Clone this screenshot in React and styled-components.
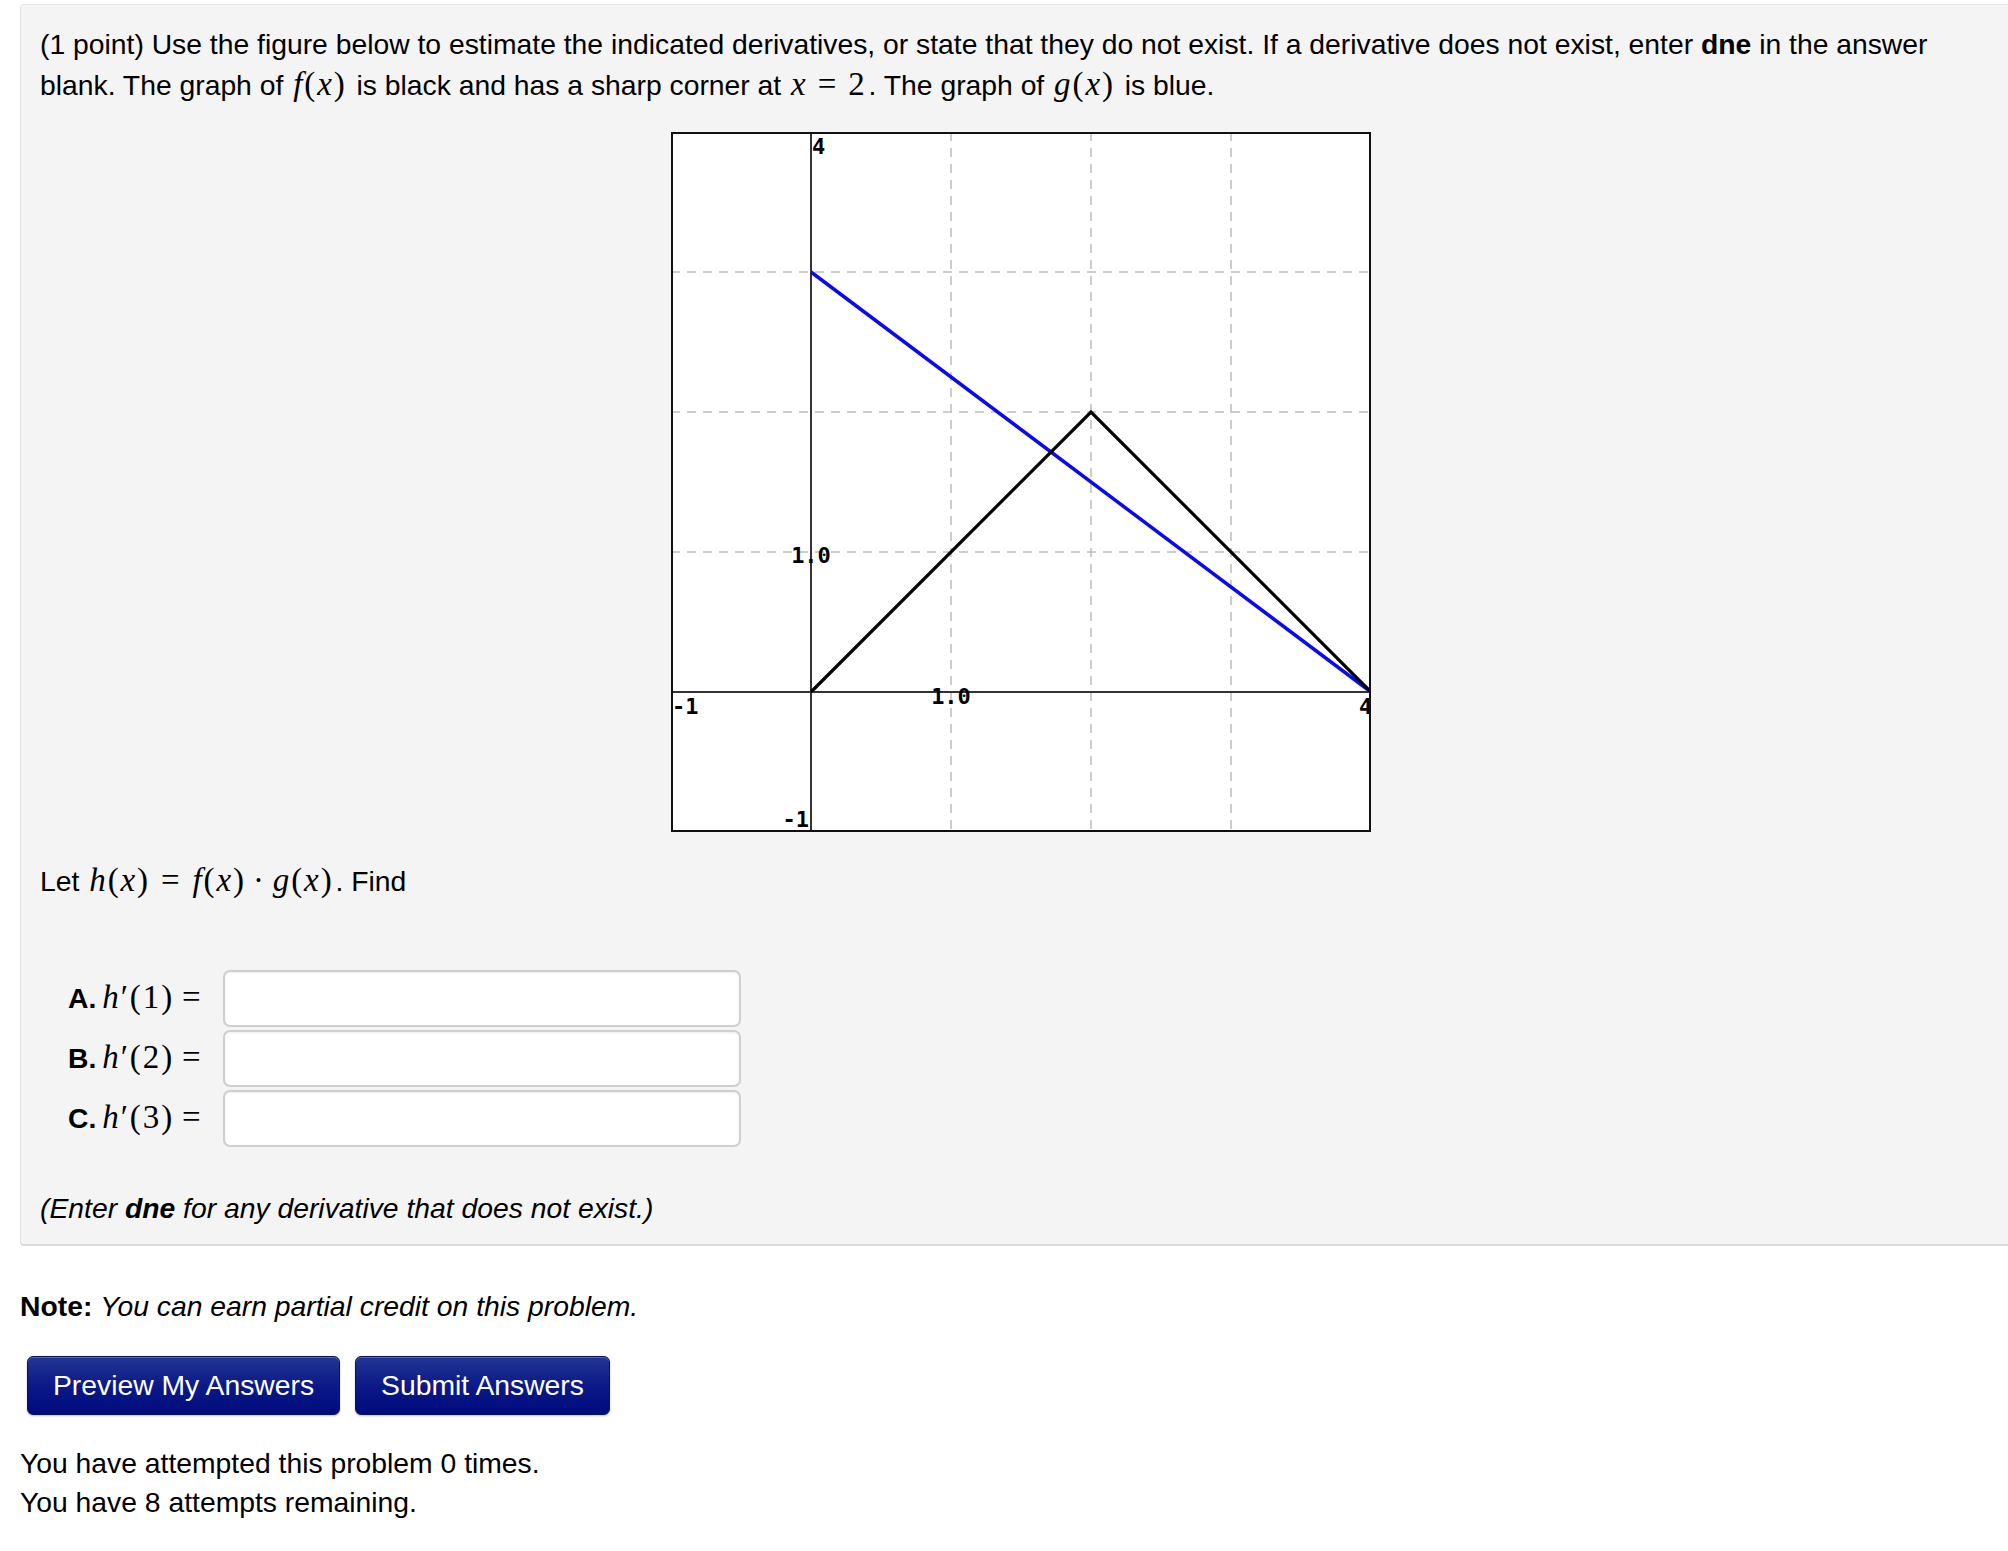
import React from "react";
import styled, { createGlobalStyle } from "styled-components";

const Global = createGlobalStyle`
  html, body { margin: 0; padding: 0; background: #ffffff; overflow: hidden; }
  body { font-family: "Liberation Sans", Arial, Helvetica, sans-serif; color: #000; }
`;

const Page = styled.div`
  padding: 4px 0 40px 20px;
  font-size: 28.3px;
  line-height: 39.5px;
`;

const Panel = styled.div`
  box-sizing: border-box;
  width: 2001px;
  background: #f4f4f4;
  border: 1px solid #e4e4e4;
  border-bottom: 2px solid #dadada;
  border-radius: 4px;
  padding: 20px 19px 16px 19px;
`;

const Para = styled.p`
  margin: ${(p) => p.$mt || 0}px 0 0 0;
  font-style: ${(p) => (p.$italic ? "italic" : "normal")};
`;

const Math = styled.span`
  font-family: "Liberation Serif", "Times New Roman", serif;
  font-size: 33px;
  letter-spacing: 1.9px;
  white-space: nowrap;
  margin: 0 2px;
`;

const V = styled.span`
  font-style: italic;
`;

const Op = styled.span`
  margin: 0 ${(p) => p.$space || 10}px;
`;

const GraphWrap = styled.div`
  display: flex;
  justify-content: center;
  margin-top: 27px;
`;

const Rows = styled.div`
  display: flex;
  flex-direction: column;
  gap: 3px;
  margin-top: 68px;
`;

const Row = styled.div`
  display: flex;
  align-items: center;
`;

const Label = styled.div`
  box-sizing: border-box;
  width: 183px;
  padding-left: 28px;
  white-space: nowrap;
`;

const Letter = styled.b`
  font-weight: bold;
  margin-right: 4px;
`;

const Input = styled.input`
  box-sizing: border-box;
  width: 518px;
  height: 57px;
  background: #fff;
  border: 2px solid #cfcfcf;
  border-radius: 7px;
  box-shadow: inset 0 1px 2px rgba(0, 0, 0, 0.08);
  font-size: 26px;
  padding: 0 10px;
  outline: none;
`;

const Buttons = styled.div`
  display: flex;
  gap: 15px;
  margin: 29px 0 0 7px;
`;

const Button = styled.button`
  height: 59px;
  padding: 0 25px;
  font-family: "Liberation Sans", Arial, sans-serif;
  font-size: 28.3px;
  color: #fff;
  background: linear-gradient(#223594 0%, #0b1a88 50%, #000a7c 100%);
  border: 1px solid #0a145e;
  border-radius: 6px;
  box-shadow: inset 0 1px 0 rgba(255, 255, 255, 0.25), 0 1px 2px rgba(0, 0, 0, 0.25);
  cursor: pointer;
`;

const Status = styled.div`
  margin-top: 29px;
`;

const U = 140;
const px = (x) => U * (x + 1);
const py = (y) => U * (4 - y);

function Graph() {
  const lbl = {
    fontFamily: '"DejaVu Sans Mono", monospace',
    fontWeight: "bold",
    fontSize: 22,
    fill: "#000",
  };
  return (
    <svg width="700" height="700" viewBox="0 0 700 700">
      <defs>
        <clipPath id="gclip">
          <rect x="0" y="0" width="700" height="700" />
        </clipPath>
      </defs>
      <rect x="0" y="0" width="700" height="700" fill="#fff" />
      <g clipPath="url(#gclip)">
        {[1, 2, 3].map((v) => (
          <line key={"v" + v} x1={px(v)} y1="0" x2={px(v)} y2="700" stroke="#bdbdbd" strokeWidth="1.5" strokeDasharray="9 7" />
        ))}
        {[1, 2, 3].map((v) => (
          <line key={"h" + v} x1="0" y1={py(v)} x2="700" y2={py(v)} stroke="#bdbdbd" strokeWidth="1.5" strokeDasharray="9 7" />
        ))}
        <line x1={px(0)} y1="0" x2={px(0)} y2="700" stroke="#333" strokeWidth="2" />
        <line x1="0" y1={py(0)} x2="700" y2={py(0)} stroke="#333" strokeWidth="2" />
        <polyline points={`${px(0)},${py(3)} ${px(4)},${py(0)}`} fill="none" stroke="#0a0af0" strokeWidth="3.5" />
        <polyline points={`${px(0)},${py(0)} ${px(2)},${py(2)} ${px(4)},${py(0)}`} fill="none" stroke="#000" strokeWidth="3.2" />
        <text x="141" y="22" style={lbl}>4</text>
        <text x={px(0)} y="431" textAnchor="middle" style={lbl}>1.0</text>
        <text x={px(1)} y="572" textAnchor="middle" style={lbl}>1.0</text>
        <text x="1" y="582" style={lbl}>-1</text>
        <text x="688" y="582" style={lbl}>4</text>
        <text x="138" y="695" textAnchor="end" style={lbl}>-1</text>
      </g>
      <rect x="1" y="1" width="698" height="698" fill="none" stroke="#111" strokeWidth="2" />
    </svg>
  );
}

const rows = ["A", "B", "C"];

export default function App() {
  return (
    <>
      <Global />
      <Page>
        <Panel>
          <Para>
            (1 point) Use the figure below to estimate the indicated derivatives, or state that they do not exist. If a derivative does not exist, enter <b>dne</b> in the answer
            <br />
            blank. The graph of{" "}
            <Math>
              <V>f</V>(<V>x</V>)
            </Math>{" "}
            is black and has a sharp corner at{" "}
            <Math>
              <V>x</V>
              <Op>=</Op>2
            </Math>
            . The graph of{" "}
            <Math>
              <V>g</V>(<V>x</V>)
            </Math>{" "}
            is blue.
          </Para>
          <GraphWrap>
            <Graph />
          </GraphWrap>
          <Para $mt={29}>
            Let{" "}
            <Math>
              <V>h</V>(<V>x</V>)<Op $space={11}>=</Op>
              <V>f</V>(<V>x</V>)<Op $space={7}>·</Op>
              <V>g</V>(<V>x</V>)
            </Math>
            . Find
          </Para>
          <Rows>
            {rows.map((r, i) => (
              <Row key={r}>
                <Label>
                  <Letter>{r}.</Letter>
                  <Math>
                    <V>h</V>′({i + 1})<Op $space={8}>=</Op>
                  </Math>
                </Label>
                <Input type="text" aria-label={`answer ${r}`} />
              </Row>
            ))}
          </Rows>
          <Para $mt={42} $italic>
            (Enter <b>dne</b> for any derivative that does not exist.)
          </Para>
        </Panel>
        <Para $mt={41}>
          <b>Note:</b> <i>You can earn partial credit on this problem.</i>
        </Para>
        <Buttons>
          <Button>Preview My Answers</Button>
          <Button>Submit Answers</Button>
        </Buttons>
        <Status>
          You have attempted this problem 0 times.
          <br />
          You have 8 attempts remaining.
        </Status>
      </Page>
    </>
  );
}
